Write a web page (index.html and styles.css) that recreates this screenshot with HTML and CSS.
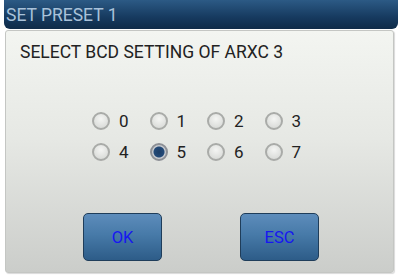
FILE: index.html
```html
<!DOCTYPE html>
<html lang="en">
<head>
<meta charset="UTF-8">
<title>Set Preset</title>
<link rel="stylesheet" href="styles.css">
</head>
<body>
<div class="dialog">
  <div class="titlebar">SET PRESET 1</div>
  <div class="panel">
    <p class="prompt">SELECT BCD SETTING OF ARXC 3</p>
    <div class="choices">
      <label class="choice"><span class="radio"></span>0</label>
      <label class="choice"><span class="radio"></span>1</label>
      <label class="choice"><span class="radio"></span>2</label>
      <label class="choice"><span class="radio"></span>3</label>
      <label class="choice"><span class="radio"></span>4</label>
      <label class="choice"><span class="radio on"></span>5</label>
      <label class="choice"><span class="radio"></span>6</label>
      <label class="choice"><span class="radio"></span>7</label>
    </div>
    <div class="actions">
      <button class="btn">OK</button>
      <button class="btn">ESC</button>
    </div>
  </div>
</div>
</body>
</html>
```

FILE: styles.css
```css
body {
    margin: 0;
    background: #fff;
    font-family: Roboto, "Liberation Sans", sans-serif;
}

.dialog {
    width: 400px;
    height: 278px;
}

.titlebar {
    height: 29px;
    margin: 0 2px 0 4px;
    padding-left: 2px;
    line-height: 30px;
    font-size: 17.5px;
    color: #a9c2da;
    background: linear-gradient(#2c5a85, #163a5f 60%, #0f2b48);
    border-radius: 0 0 6px 6px;
}

.panel {
    height: 241px;
    margin: 1px 6px 0 5px;
    border: 1px solid #c4c6c3;
    border-radius: 3px;
    background: linear-gradient(#f3f5f1, #e6e8e4 45%, #cbcdca);
    box-shadow: 1px 1px 1px rgba(0,0,0,0.15);
}

.prompt {
    margin: 0;
    padding: 11px 0 0 14px;
    font-size: 17.5px;
    color: #222;
}

.choices {
    display: grid;
    grid-template-columns: repeat(4, 57.5px);
    row-gap: 12px;
    margin: 49px 0 0 86px;
}

.choice {
    display: flex;
    align-items: center;
    gap: 9px;
    height: 19px;
    font-size: 17px;
    color: #222;
}

.radio {
    width: 14px;
    height: 14px;
    border-radius: 50%;
    border: 2px solid #a9aba8;
    background: radial-gradient(circle at 50% 35%, #f4f5f3, #d3d5d2);
    box-sizing: content-box;
}

.radio.on {
    border-color: #8d9096;
    background: radial-gradient(circle at 50% 50%, #1c3d66 0, #234a78 5px, #c8cbd0 6px);
}

.actions {
    display: flex;
    gap: 78px;
    margin: 52px 0 0 77px;
}

.btn {
    width: 79px;
    height: 48px;
    border: 1px solid #1f3d5a;
    border-radius: 5px;
    background: linear-gradient(#5d8cbb, #477aa8 45%, #2d5c88);
    color: #1717f0;
    font-family: Roboto, "Liberation Sans", sans-serif;
    font-size: 16.5px;
    padding: 0;
}
```
